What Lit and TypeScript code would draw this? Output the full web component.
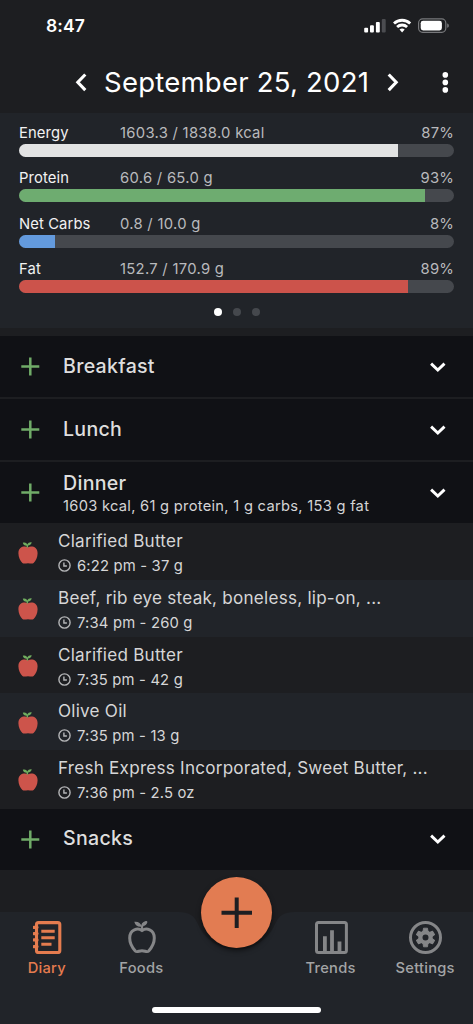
import { LitElement, html, css, svg } from "lit";
import { customElement, property } from "lit/decorators.js";

interface Nutrient {
  name: string;
  amount: string;
  percent: string;
  fill: number;
  tone: string;
}

interface Food {
  name: string;
  detail: string;
}

const NUTRIENTS: Nutrient[] = [
  { name: "Energy", amount: "1603.3 / 1838.0 kcal", percent: "87%", fill: 87.2, tone: "energy" },
  { name: "Protein", amount: "60.6 / 65.0 g", percent: "93%", fill: 93.3, tone: "protein" },
  { name: "Net Carbs", amount: "0.8 / 10.0 g", percent: "8%", fill: 8.2, tone: "carbs" },
  { name: "Fat", amount: "152.7 / 170.9 g", percent: "89%", fill: 89.4, tone: "fat" },
];

const FOODS: Food[] = [
  { name: "Clarified Butter", detail: "6:22 pm - 37 g" },
  { name: "Beef, rib eye steak, boneless, lip-on, ...", detail: "7:34 pm - 260 g" },
  { name: "Clarified Butter", detail: "7:35 pm - 42 g" },
  { name: "Olive Oil", detail: "7:35 pm - 13 g" },
  { name: "Fresh Express Incorporated, Sweet Butter, ...", detail: "7:36 pm - 2.5 oz" },
];

const diaryIcon = svg`
  <rect x="3.5" y="1.6" width="23.3" height="29.9" rx="2" fill="none" stroke="currentColor" stroke-width="3.1"/>
  <path d="M1 6.3h3M1 12.6h3M1 18.9h3M1 25.6h3" stroke="currentColor" stroke-width="3.2" stroke-linecap="round"/>
  <path d="M8.3 10.2h13.4M8.3 16.7h13.4M8.3 23.2h10.200" stroke="currentColor" stroke-width="3"/>`;

const foodsIcon = svg`
  <path d="M14 9.600C10 6.600 1.700 8 1.700 17c0 5.600 3.100 10.200 5.600 13 1.600 1.700 3.700-.3 6.700-.3s5.100 2 6.700.3c2.500-2.800 5.600-7.400 5.600-13C26.300 8 18 6.600 14 9.600Z" fill="none" stroke="currentColor" stroke-width="3" stroke-linejoin="round"/>
  <path d="M14 9.500V6.500C14 3.500 16 1.400 19 .8" fill="none" stroke="currentColor" stroke-width="2.200"/>
  <path d="M6.300.8c3.700-.5 6.500 1 7.400 4.900-3.800.5-6.500-1-7.400-4.900ZM14.500 5C15 2 16.700.6 19.400.4c-.2 2.600-1.900 4.400-4.900 4.600Z" fill="currentColor"/>`;

const trendsIcon = svg`
  <rect x="1.500" y="1.600" width="29.900" height="29.900" rx="2" fill="none" stroke="currentColor" stroke-width="3"/>
  <path d="M9.900 30V15.200M17 30V9.300M24.500 30V20.500" stroke="currentColor" stroke-width="3.800"/>`;

const settingsIcon = svg`
  <circle cx="16.500" cy="16.500" r="15" fill="none" stroke="currentColor" stroke-width="3"/>
  <circle cx="16.500" cy="16.500" r="5.100" fill="none" stroke="currentColor" stroke-width="4.200"/>
  <g fill="currentColor">
    ${[0, 60, 120, 180, 240, 300].map(
      (a) => svg`<path d="M14 11 14.500 7.200h4l.5 3.800Z" transform=${`rotate(${a} 16.500 16.500)`} stroke="currentColor" stroke-width=".9" stroke-linejoin="round"/>`,
    )}
  </g>`;

@customElement("status-bar")
class StatusBar extends LitElement {
  static styles = css`
    :host {
      display: flex;
      justify-content: space-between;
      height: 52px;
      padding: 0 23px 0 46px;
      box-sizing: border-box;
      color: #fff;
    }
    .time {
      font-size: 17.5px;
      font-weight: 600;
      line-height: 52px;
      letter-spacing: 0.1px;
    }
    .glyphs {
      display: block;
      width: 87px;
      height: 52px;
    }
  `;
  render() {
    return html`
      <span class="time">8:47</span>
      <svg class="glyphs" viewBox="363 0 87 52">
        <g fill="#fff">
          <rect x="364.200" y="27.700" width="3.900" height="4.700" rx="1" />
          <rect x="370" y="25.300" width="3.900" height="7.100" rx="1" />
          <rect x="375.900" y="22" width="3.900" height="10.400" rx="1" />
          <rect x="381.800" y="19" width="3.900" height="13.400" rx="1" fill="#4b4c50" />
        </g>
        <g fill="none" stroke="#fff" stroke-width="2.800">
          <path d="M394 23.500a11.700 11.700 0 0 1 16.200 0" />
          <path d="M397.100 27a7.300 7.300 0 0 1 10 0" />
        </g>
        <path d="M399.500 29.600a4 4 0 0 1 5.200 0l-2.600 2.900Z" fill="#fff" />
        <rect x="418.600" y="18.900" width="27.200" height="13.400" rx="4" fill="none" stroke="#77787b" stroke-width="1.200" />
        <rect x="420.700" y="20.800" width="21.200" height="9.600" rx="2.400" fill="#fff" />
        <path d="M447.200 23.400c2.200.6 2.200 3.800 0 4.400Z" fill="#77787b" />
      </svg>
    `;
  }
}

@customElement("date-header")
class DateHeader extends LitElement {
  static styles = css`
    :host {
      display: flex;
      align-items: center;
      height: 61px;
      padding: 0 20px 0 73px;
      box-sizing: border-box;
      color: #fff;
    }
    .arrow,
    .more {
      display: block;
      width: 16px;
      height: 24px;
      flex: none;
    }
    .title {
      flex: 1;
      margin: 0 0 0 15px;
      font-size: 27.500px;
      font-weight: 400;
      line-height: 61px;
      letter-spacing: 0.24px;
      white-space: nowrap;
    }
    .next {
      margin-right: 36.500px;
    }
  `;
  render() {
    return html`
      <svg class="arrow" viewBox="0 0 16 24">
        <path d="M12.300 3.500 4.800 11.300l7.500 7.800" fill="none" stroke="#fff" stroke-width="3.100" />
      </svg>
      <h1 class="title">September 25, 2021</h1>
      <svg class="arrow next" viewBox="0 0 16 24">
        <path d="M3.700 3.500 11.200 11.300l-7.500 7.800" fill="none" stroke="#fff" stroke-width="3.100" />
      </svg>
      <svg class="more" viewBox="0 0 16 24" fill="#fff">
        <circle cx="8.300" cy="3.900" r="2.800" />
        <circle cx="8.300" cy="11.400" r="2.800" />
        <circle cx="8.300" cy="18.900" r="2.800" />
      </svg>
    `;
  }
}

@customElement("nutrient-panel")
class NutrientPanel extends LitElement {
  static styles = css`
    :host {
      display: block;
      height: 215px;
      padding: 9.750px 19px 0;
      box-sizing: border-box;
      background: #212429;
    }
    .row {
      height: 45.400px;
    }
    .labels {
      display: grid;
      grid-template-columns: 101px 1fr auto;
      height: 21px;
      line-height: 21px;
      font-size: 14.800px;
      color: #b9babd;
      white-space: nowrap;
    }
    .name {
      color: #f2f2f2;
      letter-spacing: 0.1px;
    }
    .amount {
      letter-spacing: 0.29px;
    }
    .percent {
      letter-spacing: 0.2px;
    }
    .track {
      height: 13px;
      border-radius: 6.500px;
      overflow: hidden;
      background: #45484d;
    }
    .fill {
      height: 100%;
    }
    .energy {
      background: #e2e3e3;
    }
    .protein {
      background: #6eac70;
    }
    .carbs {
      background: #639add;
    }
    .fat {
      background: #cc534b;
    }
    .dots {
      display: flex;
      justify-content: center;
      gap: 11px;
      padding-top: 3.400px;
    }
    .dot {
      width: 8px;
      height: 8px;
      border-radius: 50%;
      background: #45484d;
    }
    .current {
      background: #fff;
    }
  `;
  render() {
    return html`
      ${NUTRIENTS.map(
        (n) => html`
          <div class="row">
            <div class="labels">
              <span class="name">${n.name}</span>
              <span class="amount">${n.amount}</span>
              <span class="percent">${n.percent}</span>
            </div>
            <div class="track"><div class="fill ${n.tone}" style="width:${n.fill}%"></div></div>
          </div>
        `,
      )}
      <div class="dots">
        <span class="dot current"></span><span class="dot"></span><span class="dot"></span>
      </div>
    `;
  }
}

@customElement("meal-header")
class MealHeader extends LitElement {
  @property() name = "";
  @property() summary = "";
  static styles = css`
    :host {
      display: flex;
      align-items: center;
      height: 61px;
      padding: 0 26px 0 21px;
      box-sizing: border-box;
      background: #101115;
      color: #dedede;
    }
    .plus {
      display: block;
      width: 19px;
      height: 19px;
    }
    .text {
      flex: 1;
      margin-left: 23px;
      padding-bottom: 2px;
      white-space: nowrap;
    }
    .detailed {
      padding: 3.500px 0 0;
    }
    .name {
      margin: 0;
      font-size: 19.600px;
      font-weight: 500;
      line-height: 24px;
      letter-spacing: 0.28px;
    }
    .summary {
      font-size: 14.700px;
      line-height: 23px;
      letter-spacing: 0.28px;
      color: #d4d4d5;
    }
    .chevron {
      display: block;
      width: 19px;
      height: 12px;
    }
  `;
  render() {
    return html`
      <svg class="plus" viewBox="0 0 19 19">
        <path d="M.3 9.500h18M9.300.5v18" stroke="#70ac68" stroke-width="2.500" />
      </svg>
      <div class="text ${this.summary ? "detailed" : ""}">
        <h2 class="name">${this.name}</h2>
        ${this.summary ? html`<div class="summary">${this.summary}</div>` : ""}
      </div>
      <svg class="chevron" viewBox="0 0 19 12">
        <path d="M3.100 2.600 9.800 9l6.700-6.400" fill="none" stroke="#fff" stroke-width="2.900" />
      </svg>
    `;
  }
}

@customElement("food-row")
class FoodRow extends LitElement {
  @property() name = "";
  @property() detail = "";
  static styles = css`
    :host {
      display: flex;
      padding: 0 18px 0 17.500px;
      box-sizing: border-box;
    }
    .apple {
      display: block;
      width: 20px;
      height: 22px;
      margin: 18.500px 20.500px 0 0;
      flex: none;
    }
    .text {
      padding-top: 6px;
      white-space: nowrap;
      color: #d6d6d7;
    }
    .name {
      font-size: 17.100px;
      line-height: 24px;
      letter-spacing: 0.24px;
    }
    .detail {
      display: flex;
      align-items: center;
      gap: 6px;
      font-size: 14.800px;
      line-height: 26px;
      letter-spacing: 0.18px;
    }
    .clock {
      display: block;
      width: 13px;
      height: 13px;
      margin-top: -1px;
    }
  `;
  render() {
    return html`
      <svg class="apple" viewBox="0 0 20 22">
        <path
          d="M10 5.200C6.800 3.700.4 4.200.4 11.300c0 4.300 2 7.900 4 9.700 1.600 1.200 3.400.2 5.600.2s4 1 5.600-.2c2-1.800 4-5.400 4-9.700C19.600 4.200 13.200 3.700 10 5.200Z"
          fill="#cd544b"
        />
        <path
          d="M4.800.7C7.200.1 8.600 1 9.300 2.500 10.200.7 11.600 0 13.700.3c-.2 2-1.600 3.200-3.600 3.300l.1 1.900H8.700l-.1-1.700C6.500 3.600 5.200 2.700 4.800.7Z"
          fill="#70ac5f"
        />
      </svg>
      <div class="text">
        <div class="name">${this.name}</div>
        <div class="detail">
          <svg class="clock" viewBox="0 0 13 13" fill="none" stroke="#b4b5b7">
            <circle cx="6.500" cy="6.500" r="5.600" stroke-width="1.400" />
            <path d="M5.900 3.500V7h3" stroke-width="1.400" />
          </svg>
          <span>${this.detail}</span>
        </div>
      </div>
    `;
  }
}

@customElement("tab-bar")
class TabBar extends LitElement {
  static styles = css`
    :host {
      display: block;
      position: relative;
      height: 112px;
    }
    .shape {
      position: absolute;
      inset: 0;
      width: 100%;
      height: 100%;
    }
    .tabs {
      position: relative;
      display: grid;
      grid-template-columns: repeat(5, 1fr);
      padding-top: 9px;
    }
    .tab {
      display: flex;
      flex-direction: column;
      align-items: center;
      color: #858688;
      font-size: 14.700px;
      font-weight: 500;
      line-height: 22px;
      letter-spacing: 0.24px;
    }
    .active {
      color: #e57c4f;
    }
    .icon {
      display: block;
      height: 33px;
      margin-bottom: 2.700px;
    }
    .label {
      color: #a3a4a6;
      margin-right: 1px;
    }
    .active .label {
      color: inherit;
    }
    .fab {
      position: absolute;
      left: 201px;
      top: -35.500px;
      width: 71px;
      height: 71px;
      border-radius: 50%;
      background: #e27c52;
      box-shadow: 0 3px 5px rgba(0, 0, 0, 0.5);
    }
    .home {
      position: relative;
      width: 169px;
      height: 6.500px;
      margin: 28px auto 0;
      border-radius: 4px;
      background: #fff;
    }
  `;
  private tab(label: string, width: number, icon: unknown, active = false) {
    return html`
      <div class="tab ${active ? "active" : ""}">
        <svg class="icon" viewBox="0 0 ${width} 33" width=${width} height="33">${icon}</svg>
        <span class="label">${label}</span>
      </div>
    `;
  }
  render() {
    return html`
      <svg class="shape" viewBox="0 0 473 112">
        <path
          d="M0 0H179Q193 0 197.500 11A42 42 0 0 0 275.500 11Q280 0 294 0H473V112H0Z"
          fill="#212429"
        />
      </svg>
      <div class="tabs">
        ${this.tab("Diary", 29, diaryIcon, true)} ${this.tab("Foods", 28, foodsIcon)}
        <span></span>
        ${this.tab("Trends", 33, trendsIcon)} ${this.tab("Settings", 33, settingsIcon)}
      </div>
      <svg class="fab" viewBox="0 0 71 71">
        <path d="M20.500 35.700h30.500M35.700 20.500V51" stroke="#1d1e22" stroke-width="4" />
      </svg>
      <div class="home"></div>
    `;
  }
}

@customElement("app-root")
class AppRoot extends LitElement {
  static styles = css`
    :host {
      display: flex;
      flex-direction: column;
      height: 1024px;
      overflow: hidden;
      background: #1d1e21;
      font-family: Inter, "Liberation Sans", sans-serif;
    }
    .meals {
      display: flex;
      flex-direction: column;
      gap: 2px;
      margin-top: 8px;
      flex: 1;
    }
    .foods {
      margin-top: -2px;
    }
    .food {
      height: 56.750px;
    }
    .food:nth-child(even) {
      background: #212429;
    }
  `;
  render() {
    return html`
      <status-bar></status-bar>
      <date-header></date-header>
      <nutrient-panel></nutrient-panel>
      <div class="meals">
        <meal-header name="Breakfast"></meal-header>
        <meal-header name="Lunch"></meal-header>
        <meal-header name="Dinner" summary="1603 kcal, 61 g protein, 1 g carbs, 153 g fat"></meal-header>
        <div class="foods">
          ${FOODS.map((f) => html`<food-row class="food" .name=${f.name} .detail=${f.detail}></food-row>`)}
        </div>
        <meal-header name="Snacks"></meal-header>
      </div>
      <tab-bar></tab-bar>
    `;
  }
}
